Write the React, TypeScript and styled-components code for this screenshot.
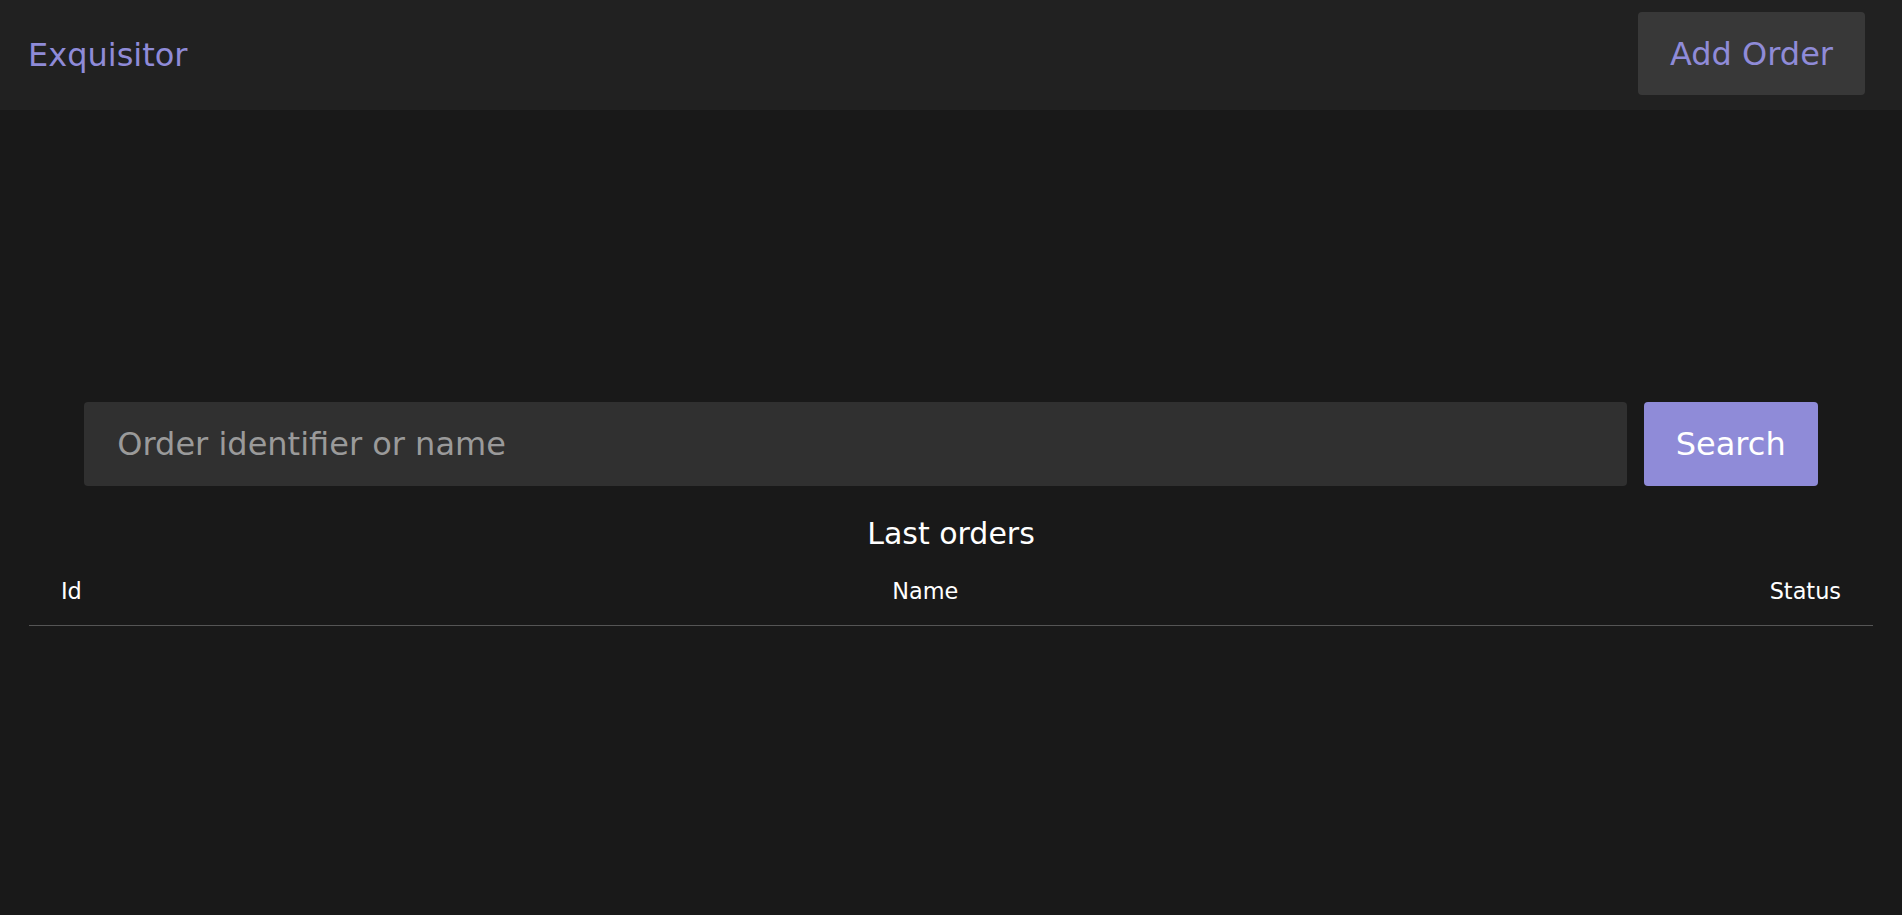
import React from "react";
import styled, { createGlobalStyle } from "styled-components";

const GlobalStyle = createGlobalStyle`
  html, body {
    margin: 0;
    padding: 0;
    background: #191919;
    font-family: "DejaVu Sans", "Liberation Sans", sans-serif;
    color: #ffffff;
  }
  * { box-sizing: border-box; }
`;

const Header = styled.header`
  display: flex;
  align-items: center;
  justify-content: space-between;
  height: 110px;
  padding: 12px 37px 15px 28px;
  background: #212121;
`;

const Brand = styled.a`
  font-size: 32px;
  color: #8f8bd8;
  text-decoration: none;
  transform: translateY(1px);
`;

const HeaderButton = styled.button`
  height: 83px;
  padding: 0 32px;
  border: none;
  border-radius: 4px;
  background: #383838;
  color: #8f8bd8;
  font-family: inherit;
  font-size: 32px;
  cursor: pointer;
`;

const Main = styled.main`
  padding: 292px 29px 0;
`;

const SearchRow = styled.form`
  display: flex;
  gap: 17px;
  width: 94%;
  margin: 0 auto;
`;

const SearchInput = styled.input`
  flex: 1;
  height: 84px;
  padding: 0 33px;
  border: none;
  border-radius: 4px;
  background: #303030;
  color: #ffffff;
  font-family: inherit;
  font-size: 32px;
  outline: none;
  &::placeholder {
    color: #9a9a9a;
  }
`;

const SearchButton = styled.button`
  height: 84px;
  padding: 0 32px;
  border: none;
  border-radius: 4px;
  background: #8f8bd8;
  color: #ffffff;
  font-family: inherit;
  font-size: 32px;
  cursor: pointer;
`;

const Title = styled.h2`
  margin: 30px 0 0;
  text-align: center;
  font-size: 30px;
  font-weight: normal;
  color: #ffffff;
`;

const Table = styled.table`
  width: 100%;
  margin-top: 8px;
  border-collapse: collapse;
`;

const HeadCell = styled.th<{ $align?: string }>`
  padding: 19px 32px 21px;
  text-align: ${(p) => p.$align || "left"};
  font-size: 22.4px;
  font-weight: normal;
  color: #ffffff;
  border-bottom: 1px solid #555555;
`;

export default function App() {
  return (
    <>
      <GlobalStyle />
      <Header>
        <Brand href="#">Exquisitor</Brand>
        <HeaderButton type="button">Add Order</HeaderButton>
      </Header>
      <Main>
        <SearchRow onSubmit={(e) => e.preventDefault()}>
          <SearchInput placeholder="Order identifier or name" />
          <SearchButton type="submit">Search</SearchButton>
        </SearchRow>
        <Title>Last orders</Title>
        <Table>
          <colgroup>
            <col style={{ width: "45.1%" }} />
            <col style={{ width: "47.6%" }} />
            <col />
          </colgroup>
          <thead>
            <tr>
              <HeadCell>Id</HeadCell>
              <HeadCell>Name</HeadCell>
              <HeadCell $align="right">Status</HeadCell>
            </tr>
          </thead>
          <tbody />
        </Table>
      </Main>
    </>
  );
}
